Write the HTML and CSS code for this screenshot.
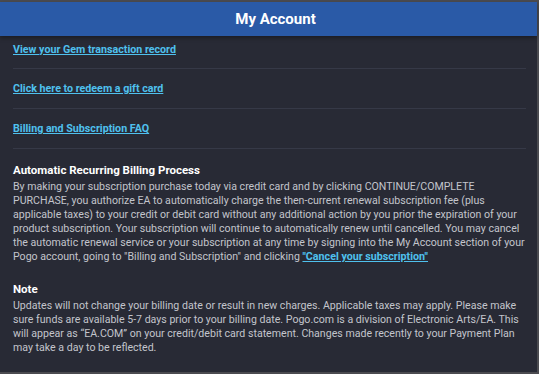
FILE: index.html
```html
<!DOCTYPE html>
<html lang="en">
<head>
    <meta charset="UTF-8">
    <meta name="viewport" content="width=device-width, initial-scale=1.0">
    <title>My Account</title>
    <link rel="stylesheet" href="styles.css">
</head>
<body>
    <div class="frame">
        <header class="topbar">
            <h1>My Account</h1>
        </header>

        <div class="content">
            <div class="link-row first">
                <a href="#">View your Gem transaction record</a>
            </div>
            <div class="link-row">
                <a href="#">Click here to redeem a gift card</a>
            </div>
            <div class="link-row">
                <a href="#">Billing and Subscription FAQ</a>
            </div>

            <div class="info-section">
                <h2>Automatic Recurring Billing Process</h2>
                <p>By making your subscription purchase today via credit card and by clicking CONTINUE/COMPLETE PURCHASE, you authorize EA to automatically charge the then-current renewal subscription fee (plus applicable taxes) to your credit or debit card without any additional action by you prior the expiration of your product subscription. Your subscription will continue to automatically renew until cancelled. You may cancel the automatic renewal service or your subscription at any time by signing into the My Account section of your Pogo account, going to "Billing and Subscription" and clicking <a href="#">"Cancel your subscription"</a></p>
            </div>

            <div class="info-section">
                <h2>Note</h2>
                <p>Updates will not change your billing date or result in new charges. Applicable taxes may apply. Please make sure funds are available 5-7 days prior to your billing date. Pogo.com is a division of Electronic Arts/EA. This will appear as “EA.COM” on your credit/debit card statement. Changes made recently to your Payment Plan may take a day to be reflected.</p>
            </div>
        </div>
    </div>
</body>
</html>
```

FILE: styles.css
```css
html, body {
    margin: 0;
    height: 100%;
}
body {
    font-family: Roboto, "Liberation Sans", Arial, sans-serif;
    background-color: #4b4b50;
    overflow: hidden;
}
.frame {
    box-sizing: border-box;
    margin: 2px 2px 2px 0;
    height: calc(100% - 4px);
    background-color: #282a35;
}
.topbar {
    height: 34px;
    padding-left: 14px;
    background-color: #2a5aa7;
    display: flex;
    align-items: center;
    justify-content: center;
    box-shadow: 0 2px 4px rgba(0,0,0,0.35);
}
.topbar h1 {
    margin: 0;
    color: #fff;
    font-size: 15px;
    font-weight: bold;
}
.content {
    padding: 0 11px 0 13px;
}
.link-row {
    height: 40px;
    line-height: 36px;
    border-bottom: 1px solid #363947;
    box-sizing: border-box;
}
.link-row.first {
    height: 33px;
    line-height: 24px;
}
.link-row a, .info-section a {
    color: #4fc1ee;
    font-size: 10.7px;
    font-weight: bold;
}
.info-section {
    padding-top: 14px;
}
.info-section + .info-section {
    padding-top: 18px;
}
.info-section h2 {
    margin: 0 0 3px;
    color: #fff;
    font-size: 11.5px;
    font-weight: bold;
}
.info-section p {
    margin: 0;
    color: #c3c5cc;
    font-size: 10.6px;
    line-height: 14px;
}
```
